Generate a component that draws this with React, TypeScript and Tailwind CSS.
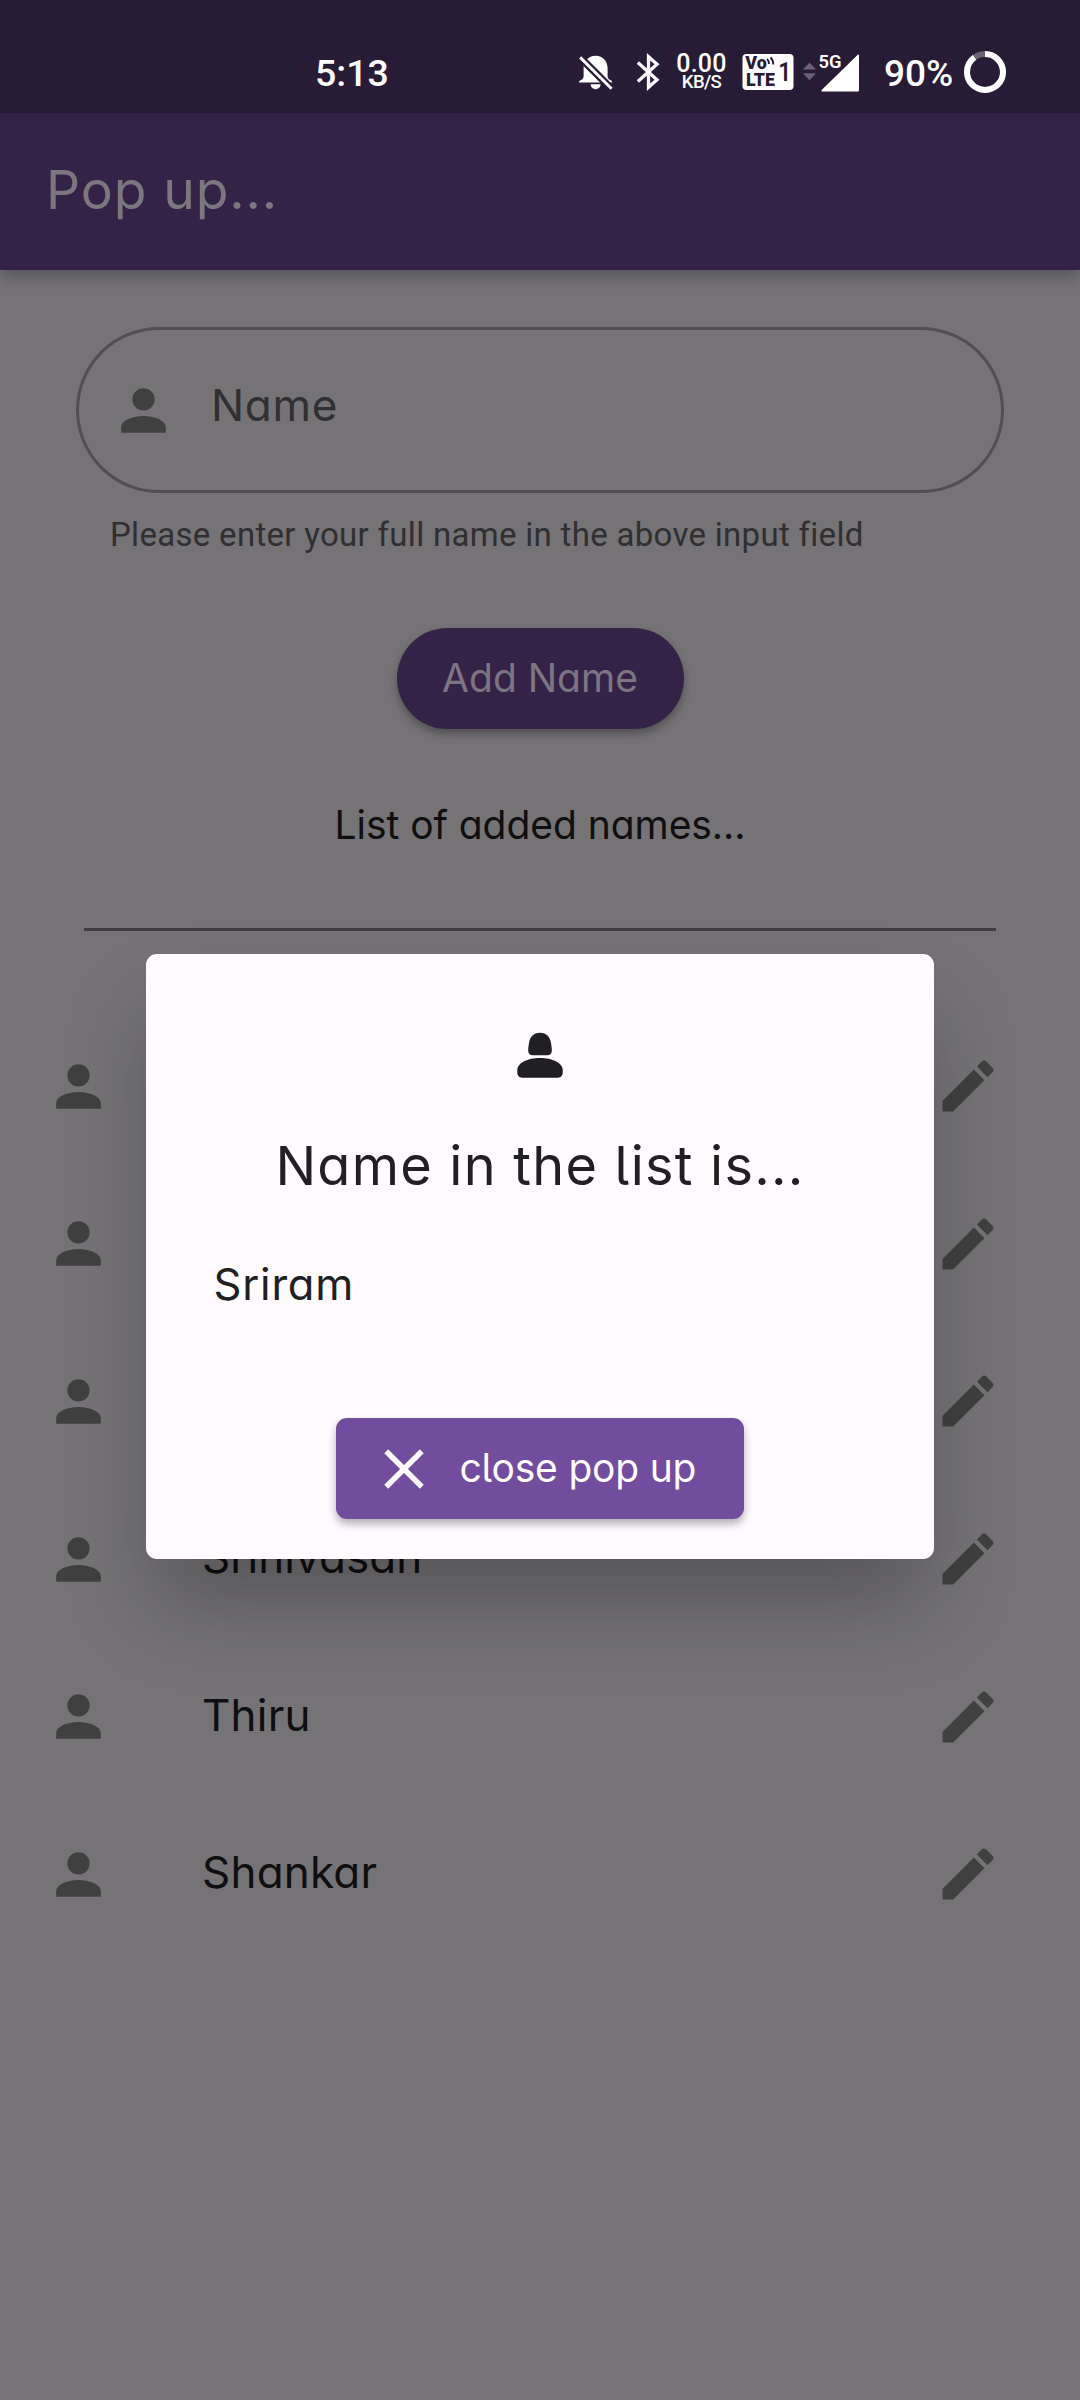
import React from "react";

function PersonIcon({ className }: { className: string }) {
  return (
    <svg viewBox="0 0 24 24" fill="currentColor" className={className}>
      <path d="M12 4a4 4 0 0 1 4 4 4 4 0 0 1-4 4 4 4 0 0 1-4-4 4 4 0 0 1 4-4m0 10c4.420 0 8 1.790 8 4v2H4v-2c0-2.210 3.580-4 8-4z" />
    </svg>
  );
}

function PencilIcon({ className }: { className: string }) {
  return (
    <svg viewBox="0 0 24 24" fill="currentColor" className={className}>
      <path d="M3 17.25V21h3.75L17.81 9.94l-3.75-3.75L3 17.25zM20.71 7.04c.39-.39.39-1.020 0-1.410l-2.340-2.340c-.39-.39-1.020-.39-1.410 0l-1.830 1.830 3.750 3.750 1.830-1.830z" />
    </svg>
  );
}

/* Heavier person glyph with rounded corners used as the dialog's hero icon */
function DialogPersonIcon() {
  return (
    <svg viewBox="0 0 66 66" fill="currentColor" className="size-[66px]">
      <path d="M33 10.700c6.500 0 10.300 4.300 11 10.300.5 3.200.8 5.200.8 7.500 0 3-1.600 4.800-4.600 4.800H25.800c-3 0-4.600-1.800-4.600-4.800 0-2.300.3-4.300.8-7.500.7-6 4.500-10.300 11-10.300z" />
      <path d="M33 36c12 0 22.700 4.800 22.700 12.200v2.300c0 3.200-2 5.200-5 5.200H15.300c-3 0-5-2-5-5.200v-2.300C10.300 40.800 21 36 33 36z" />
    </svg>
  );
}

function BellOffIcon() {
  return (
    <svg viewBox="0 0 36 38" className="h-[38px] w-9" fill="#fff">
      <path d="M17.600 1.700c-7.500 0-12 5.800-12 12.300v8.200c0 2-1 3-2.600 3.900-1.500.8-2 1.300-2 2.400h33.200c0-1.100-.5-1.600-2-2.400-1.600-.9-2.600-1.900-2.600-3.900V14c0-6.500-4.500-12.300-12-12.300z" />
      <path d="M12.600 30.300h10a5 5 0 0 1-10 0z" />
      <path d="M0 1.200 35.200 36.400" stroke="#281b36" strokeWidth="7.500" />
      <path d="M2.200 3.400 33.600 34.800" stroke="#fff" strokeWidth="2.900" />
    </svg>
  );
}

function BluetoothIcon() {
  return (
    <svg viewBox="0 0 24 38" className="h-[38px] w-6" fill="none" stroke="#fff" strokeWidth="3.300">
      <path d="M1.800 9.500 21 26.700l-8.500 7.600V3.700L21 11.300 1.800 28.500" />
    </svg>
  );
}

function VolteIcon() {
  return (
    <svg viewBox="0 0 52 38" className="h-[38px] w-[52px] font-['Roboto'] font-black" fill="#281b36">
      <rect x="0.500" y="1" width="51" height="36" rx="4" fill="#fff" />
      <text x="3.300" y="16.300" fontSize="18" textLength="21.500" lengthAdjust="spacingAndGlyphs">Vo</text>
      <text x="4" y="33.300" fontSize="18" textLength="29" lengthAdjust="spacingAndGlyphs">LTE</text>
      <path d="M25 6c1.300 1.200 2 2.700 2 5M28.500 4.500c1.900 1.800 2.900 4 2.900 7" fill="none" stroke="#281b36" strokeWidth="1.800" />
      <text x="36.300" y="28" fontSize="25" className="font-semibold" textLength="13" lengthAdjust="spacingAndGlyphs">1</text>
    </svg>
  );
}

function SignalIcon() {
  return (
    <svg viewBox="0 0 57 40" className="h-10 w-[57px] font-['Roboto'] font-semibold" fill="#fff">
      <path d="m6.500 9.500 6.500 7H0zM6.500 27.300l6.500-7H0z" fill="#6a6174" />
      <path d="M54.500 1.900c.7-.7 1.500-.4 1.500.7V37c0 1-.6 1.600-1.600 1.600H19.800c-1.300 0-1.800-.9-.9-1.800z" />
      <text x="15.500" y="15.300" fontSize="18.500" textLength="23" lengthAdjust="spacingAndGlyphs" stroke="#281b36" strokeWidth="2.500" paintOrder="stroke">5G</text>
    </svg>
  );
}

function BatteryRing() {
  return (
    <svg viewBox="0 0 42 42" className="size-[42px]" fill="none" strokeWidth="6">
      <circle cx="21" cy="21" r="18" stroke="#6a6174" />
      <circle cx="21" cy="21" r="18" stroke="#fff" pathLength="100" strokeDasharray="90 10" transform="rotate(-90 21 21)" />
    </svg>
  );
}

function StatusBar() {
  return (
    <div className="flex h-[113px] items-start bg-[#281b36] font-['Roboto'] font-medium text-white">
      <div className="mt-[53px] ml-[315px] w-[263px] text-[37.500px] leading-10">5:13</div>
      <div className="mt-[54px]"><BellOffIcon /></div>
      <div className="mt-[53px] ml-[22px]"><BluetoothIcon /></div>
      <div className="mt-[55px] ml-[15px] flex w-[53px] flex-col items-center">
        <div className="text-[25px] leading-[18px] tracking-[0.2px]">0.00</div>
        <div className="mt-0.5 text-[18.500px] leading-[15px] tracking-[-0.6px]">KB/S</div>
      </div>
      <div className="mt-[53px] ml-3.5"><VolteIcon /></div>
      <div className="mt-[53px] ml-[9px]"><SignalIcon /></div>
      <div className="mt-[53.500px] ml-[24px] w-20 text-[37px] leading-10">90%</div>
      <div className="mt-[51px]"><BatteryRing /></div>
    </div>
  );
}

function NameRow({ name, tracking }: { name: string; tracking: string }) {
  return (
    <li className="flex h-[157.600px] items-center text-[#414041]">
      <PersonIcon className="ml-[45px] size-[67px]" />
      <span className={`ml-[90px] flex-1 -translate-y-0.5 text-[44px] leading-[50px] text-[#0f0e10] ${tracking}`}>{name}</span>
      <PencilIcon className="mr-[78px] size-[68px]" />
    </li>
  );
}

const rows = [
  { name: "", tracking: "" },
  { name: "", tracking: "" },
  { name: "", tracking: "" },
  { name: "Srinivasan", tracking: "tracking-[0.05px]" },
  { name: "Thiru", tracking: "tracking-[0.2px]" },
  { name: "Shankar", tracking: "tracking-[0.2px]" },
];

function PopUp() {
  return (
    <div className="absolute top-[954px] left-[146px] flex h-[605px] w-[788px] flex-col items-center rounded-[11px] bg-[#fffbff] pt-[68px] text-[#202022] shadow-[0_52px_86px_-8px_rgba(0,0,0,0.26)]">
      <DialogPersonIcon />
      <h2 className="mt-[48px] text-[54px] leading-[60px] tracking-[1.250px]">Name in the list is...</h2>
      <p className="mt-[63px] self-start pl-[67.500px] text-[43.500px] leading-[50px] tracking-[0.800px]">Sriram</p>
      <button className="mt-[109px] flex h-[101px] w-[408px] items-center rounded-[11px] bg-[#724c9d] text-[39px] leading-[50px] tracking-[-0.200px] text-[#fffbff] shadow-[0_5px_8px_rgba(0,0,0,0.3)]">
        <svg viewBox="0 0 40 40" className="ml-[47.500px] size-10" stroke="currentColor" strokeWidth="5.500">
          <path d="m2.200 2.200 35.600 35.600M37.800 2.200 2.200 37.800" />
        </svg>
        <span className="ml-9 -translate-y-px">close pop up</span>
      </button>
    </div>
  );
}

export default function App() {
  return (
    <div className="relative h-[2400px] w-[1080px] overflow-hidden bg-[#757376] font-['Inter',sans-serif] [font-feature-settings:'cv11','cv05']">
      <StatusBar />
      <header className="flex h-[157px] items-start bg-[#342346] pt-[47px] pl-[46px] text-[53.500px] leading-[60px] tracking-[0.850px] text-[#7c777e] shadow-[0_7px_14px_rgba(0,0,0,0.26)]">
        Pop up...
      </header>

      <main className="flex flex-col items-center">
        <div className="mt-[57px] flex h-[166px] w-[928px] items-center rounded-full border-[3px] border-[#504e51]">
          <PersonIcon className="ml-[31px] size-[67px] text-[#414041]" />
          <span className="ml-[34px] -translate-y-[5px] text-[44px] leading-[50px] tracking-[0.700px] text-[#302f32]">Name</span>
        </div>
        <p className="mt-[22px] self-start pl-[110px] font-['Roboto'] text-[33px] leading-10 tracking-[0.300px] text-[#302f32]">
          Please enter your full name in the above input field
        </p>
        <button className="mt-[73px] flex h-[101px] w-[287px] items-center justify-center rounded-full bg-[#342346] pb-0.5 text-[39px] leading-[50px] text-[#7e7583] shadow-[0_5px_8px_rgba(0,0,0,0.3)]">
          Add Name
        </button>
        <p className="mt-[71px] text-[39px] leading-[50px] tracking-[-0.050px] text-[#0f0e10]">List of added names...</p>
        <hr className="mt-[78px] h-[3px] w-[912px] border-0 bg-[#3f3c42]" />
        <ul className="mt-[76.500px] w-full">
          {rows.map((row, i) => (
            <NameRow key={i} name={row.name} tracking={row.tracking} />
          ))}
        </ul>
      </main>

      <PopUp />
    </div>
  );
}
